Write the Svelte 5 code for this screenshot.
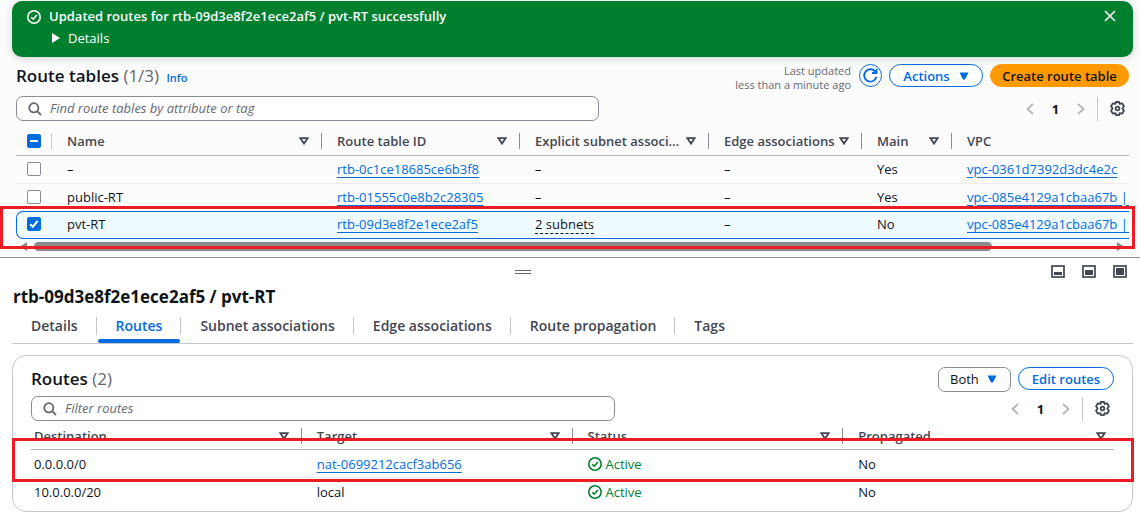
<script>
  let rows = $state([
    { name: '–', id: 'rtb-0c1ce18685ce6b3f8', subnets: '–', edge: '–', main: 'Yes', vpc: 'vpc-0361d7392d3dc4e2c', selected: false },
    { name: 'public-RT', id: 'rtb-01555c0e8b2c28305', subnets: '–', edge: '–', main: 'Yes', vpc: 'vpc-085e4129a1cbaa67b | th', selected: false },
    { name: 'pvt-RT', id: 'rtb-09d3e8f2e1ece2af5', subnets: '2 subnets', edge: '–', main: 'No', vpc: 'vpc-085e4129a1cbaa67b | th', selected: true }
  ]);
  const columns = [
    { label: 'Name', cls: 'c-name' },
    { label: 'Route table ID', cls: 'c-id' },
    { label: 'Explicit subnet associ…', cls: 'c-subnet' },
    { label: 'Edge associations', cls: 'c-edge' },
    { label: 'Main', cls: 'c-main' },
    { label: 'VPC', cls: 'c-vpc' }
  ];
  const routeColumns = ['Destination', 'Target', 'Status', 'Propagated'];
  const routes = [
    { dest: '0.0.0.0/0', target: 'nat-0699212cacf3ab656', link: true, propagated: 'No' },
    { dest: '10.0.0.0/20', target: 'local', link: false, propagated: 'No' }
  ];
  const tabs = ['Details', 'Routes', 'Subnet associations', 'Edge associations', 'Route propagation', 'Tags'];
  let active = $state('Routes');
  const panelIcons = [
    { label: 'Small panel', y: 7, h: 3 },
    { label: 'Medium panel', y: 5, h: 5 },
    { label: 'Full panel', y: 3, h: 7 }
  ];
</script>

{#snippet check()}
  <svg class="check" viewBox="0 0 14 14" aria-hidden="true"><circle cx="7" cy="7" r="6.2" /><path d="M4.2 7.2 6.2 9.2 9.9 5" /></svg>
{/snippet}
{#snippet sort()}
  <svg class="sort" viewBox="0 0 10 8" aria-hidden="true"><path d="M1.4 1.2H8.6L5 6.6Z" /></svg>
{/snippet}
{#snippet caret()}
  <svg class="caret" viewBox="0 0 10 8" aria-hidden="true"><path d="M.5.5H9.5L6 7.5H4Z" /></svg>
{/snippet}
{#snippet search()}
  <svg class="glass" viewBox="0 0 14 14" aria-hidden="true"><circle cx="5.8" cy="5.8" r="4.6" /><path d="M9.2 9.2 13 13" /></svg>
{/snippet}
{#snippet pager()}
  <div class="pager">
    <button class="page-arrow" aria-label="Previous page"><svg viewBox="0 0 8 12"><path d="M7 1 1.5 6 7 11" /></svg></button>
    <span class="page">1</span>
    <button class="page-arrow" aria-label="Next page"><svg viewBox="0 0 8 12"><path d="M1 1 6.5 6 1 11" /></svg></button>
    <span class="rule"></span>
    <button class="gear" aria-label="Preferences">
      <svg viewBox="0 0 14 14"><path d="M5.5.9H8.5L9 2.7 11.3 2.2 13 4.9 11.6 7 13 9.1 11.3 11.8 9 11.3 8.5 13.1H5.5L5 11.3 2.7 11.8 1 9.1 2.4 7 1 4.9 2.7 2.2 5 2.7Z" /><circle cx="7" cy="7" r="1.7" /></svg>
    </button>
  </div>
{/snippet}

<div class="page-root">
  <div class="flash" role="status">
    {@render check()}
    <div class="flash-body">
      <strong>Updated routes for rtb-09d3e8f2e1ece2af5 / pvt-RT successfully</strong>
      <button class="details"><svg viewBox="0 0 8 10" aria-hidden="true"><path d="M0 0 8 5 0 10Z" /></svg>Details</button>
    </div>
    <button class="close" aria-label="Dismiss"><svg viewBox="0 0 12 12"><path d="M1 1 11 11M11 1 1 11" /></svg></button>
  </div>

  <section class="tables">
    <header class="bar">
      <h1>Route tables <span class="count">(1/3)</span> <a class="info" href="#info">Info</a></h1>
      <div class="updated">Last updated<br />less than a minute ago</div>
      <button class="btn round" aria-label="Refresh"><svg viewBox="0 0 18 18"><path d="M15.2 10.4A6.5 6.5 0 1 1 14.2 5.2M15.4 1.8V6.4H10.6" /></svg></button>
      <button class="btn actions">Actions {@render caret()}</button>
      <button class="btn primary">Create route table</button>
    </header>
    <div class="tools">
      <label class="search">{@render search()}<input type="text" aria-label="Find route tables" placeholder="Find route tables by attribute or tag" /></label>
      {@render pager()}
    </div>

    <div class="grid-area">
      <div class="clip">
        <table class="main-table">
          <thead>
            <tr>
              <th class="c-check"><div class="th"><input type="checkbox" class="mixed" checked aria-label="Select all" /></div></th>
              {#each columns as c}
                <th class={c.cls}><div class="th"><span>{c.label}</span>{@render sort()}</div></th>
              {/each}
            </tr>
          </thead>
          <tbody>
            {#each rows as r}
              <tr class:selected={r.selected}>
                <td class="c-check"><input type="checkbox" bind:checked={r.selected} aria-label={'Select ' + r.id} /></td>
                <td>{r.name}</td>
                <td><a href="#{r.id}">{r.id}</a></td>
                <td><span class:dashed={r.subnets !== '–'}>{r.subnets}</span></td>
                <td>{r.edge}</td>
                <td>{r.main}</td>
                <td><a href="#vpc">{r.vpc}</a></td>
              </tr>
            {/each}
          </tbody>
        </table>
      </div>
      <div class="scrollbar" aria-hidden="true">
        <svg viewBox="0 0 7 9"><path d="M7 0V9L0 4.5Z" /></svg>
        <div class="track"><div class="thumb"></div></div>
        <svg viewBox="0 0 7 9"><path d="M0 0V9L7 4.5Z" /></svg>
      </div>
      <div class="mark mark-row"></div>
    </div>
  </section>

  <section class="panel">
    <div class="panel-top">
      <button class="handle" aria-label="Resize panel"></button>
      <div class="sizes">
        {#each panelIcons as p}
          <button aria-label={p.label}><svg viewBox="0 0 14 14"><rect class="frame" x="1" y="1" width="12" height="11" /><rect x="3" y={p.y} width="8" height={p.h} /></svg></button>
        {/each}
      </div>
    </div>
    <h2>rtb-09d3e8f2e1ece2af5 / pvt-RT</h2>
    <div class="tabs" role="tablist">
      {#each tabs as t}
        <div class="tab"><button role="tab" aria-selected={active === t} class:active={active === t} onclick={() => (active = t)}>{t}</button></div>
      {/each}
    </div>

    <div class="card">
      <header class="card-head">
        <h3>Routes <span class="count">(2)</span></h3>
        <div class="select"><select aria-label="Route type"><option>Both</option></select>{@render caret()}</div>
        <button class="btn edit">Edit routes</button>
      </header>
      <div class="tools">
        <label class="search">{@render search()}<input type="text" aria-label="Filter routes" placeholder="Filter routes" /></label>
        {@render pager()}
      </div>
      <table class="routes">
        <thead>
          <tr>{#each routeColumns as c}<th><div class="th"><span>{c}</span>{@render sort()}</div></th>{/each}</tr>
        </thead>
        <tbody>
          {#each routes as r}
            <tr>
              <td>{r.dest}</td>
              <td>{#if r.link}<a href="#nat">{r.target}</a>{:else}{r.target}{/if}</td>
              <td><span class="status">{@render check()}Active</span></td>
              <td>{r.propagated}</td>
            </tr>
          {/each}
        </tbody>
      </table>
      <div class="mark mark-route"></div>
    </div>
  </section>
</div>

<style>
  :global(body) { background: #fff; }
  .page-root { font: 13px/20px "Open Sans", "Noto Sans", sans-serif; color: #0f141a; background: #fcfcfd; overflow: hidden; }
  .page-root * { box-sizing: border-box; }
  button, input, select { font: inherit; color: inherit; }
  button { padding: 0; border: 0; background: none; cursor: pointer; }
  svg { display: block; flex: none; fill: none; stroke: currentColor; }
  h1, h2, h3 { margin: 0; font-size: 17px; line-height: 24px; font-weight: 600; }
  .count { font-weight: 400; color: #656871; }
  a { color: #006ce0; text-underline-offset: 3px; }

  .flash { display: flex; gap: 8px; margin: 1px 7px 0 12px; padding: 5px 17px 7px 15px; min-height: 56px; border-radius: 10px; background: #00802f; color: #fff; box-shadow: 0 2px 8px rgba(0, 7, 22, 0.16); }
  .check { width: 14px; height: 14px; stroke-width: 1.6; }
  .flash > .check { margin-top: 4px; }
  .flash-body { flex: 1; display: flex; flex-direction: column; align-items: flex-start; }
  .flash strong { font-weight: 600; }
  .details { display: flex; align-items: center; gap: 8px; margin-left: 3px; font-weight: 500; line-height: 24px; }
  .details svg { width: 8px; height: 10px; fill: #fff; stroke: none; }
  .close { width: 12px; height: 20px; }
  .close svg { width: 12px; height: 12px; stroke-width: 1.6; }

  .tables { padding: 7px 11px 6px 16px; }
  .bar { display: flex; align-items: flex-start; height: 32px; }
  .bar h1 { margin-right: auto; }
  .info { margin-left: 3px; font-size: 11px; font-weight: 600; text-decoration: none; }
  .updated { margin-right: 8px; font-size: 11px; line-height: 14px; text-align: right; color: #656871; }
  .btn { display: flex; align-items: center; justify-content: center; height: 23px; border: 1px solid #006ce0; border-radius: 12px; background: #fff; color: #006ce0; font-weight: 600; }
  .round { width: 23px; margin-right: 7px; }
  .round svg { width: 17px; height: 17px; stroke-width: 2; }
  .actions { gap: 9px; width: 94px; margin-right: 7px; }
  .caret { width: 10px; height: 8px; fill: #006ce0; stroke: none; }
  .primary { width: 139px; border-color: #ff9900; background: #ff9900; color: #0f141a; }

  .tools { display: flex; align-items: center; }
  .search { display: flex; align-items: center; gap: 8px; height: 25px; padding: 0 11px; border: 1px solid #8c8c94; border-radius: 7px; background: #fff; }
  .tables .search { width: 583px; }
  .card .search { width: 584px; }
  .search input { flex: 1; min-width: 0; padding: 0 0 1px; border: 0; outline: 0; background: none; }
  .search input::placeholder { color: #656871; font-style: italic; opacity: 1; }
  .glass { width: 14px; height: 14px; stroke: #656871; stroke-width: 1.8; }
  .pager { display: flex; align-items: center; margin-left: auto; padding-right: 4px; }
  .page-arrow { color: #b4b4bb; }
  .page-arrow svg { width: 8px; height: 12px; stroke-width: 1.8; }
  .page { width: 43px; text-align: center; font-weight: 700; }
  .rule { width: 1px; height: 24px; margin: 0 12px; background: #c6c6cd; }
  .gear { color: #424650; }
  .gear svg { width: 15px; height: 15px; stroke-width: 1.7; stroke-linejoin: round; }

  .grid-area { position: relative; padding-top: 6px; }
  .clip { overflow: hidden; }
  table { border-collapse: separate; border-spacing: 0; table-layout: fixed; width: 100%; }
  .main-table { width: 112%; }
  th, td { padding: 0; text-align: left; font-weight: 400; white-space: nowrap; }
  th { height: 29px; border-bottom: 1px solid #b6b6bf; color: #424650; font-weight: 600; }
  .th { display: flex; align-items: center; justify-content: space-between; height: 16px; padding: 0 12px 0 15px; border-right: 1px solid #8c8c94; }
  .sort { width: 10px; height: 8px; stroke-width: 1.8; }
  td { height: 28px; padding: 0 0 2px 15px; border-bottom: 1px solid #ebebf0; }
  .c-check { width: 36px; }
  .c-check .th { padding: 0 0 0 11px; border-color: #c6c6cd; }
  td.c-check { padding-left: 11px; }
  .c-name { width: 270px; }
  .c-id { width: 198px; }
  .c-subnet { width: 189px; }
  .c-edge { width: 153px; }
  .c-main { width: 90px; }
  tbody tr:nth-child(2) td { height: 27px; border-bottom: 0; }
  tr.selected td { border-top: 1px solid #006ce0; border-bottom: 1px solid #006ce0; background: #f0fbff; }
  tr.selected td:first-child { border-left: 1px solid #006ce0; border-radius: 7px 0 0 7px; padding-left: 10px; }
  .dashed { border-bottom: 1px dashed #0f141a; }
  input[type='checkbox'] { display: block; appearance: none; width: 14px; height: 14px; margin: 0; border: 1px solid #8c8c94; border-radius: 2px; background: #fff center / 14px 14px no-repeat; }
  input[type='checkbox']:checked { border-color: #006ce0; background-color: #006ce0; background-image: url("data:image/svg+xml,%3Csvg xmlns='http://www.w3.org/2000/svg' viewBox='0 0 14 14'%3E%3Cpath d='M3.2 7.2 5.8 9.8 10.6 4' fill='none' stroke='white' stroke-width='2'/%3E%3C/svg%3E"); }
  input.mixed:checked { background-image: url("data:image/svg+xml,%3Csvg xmlns='http://www.w3.org/2000/svg' viewBox='0 0 14 14'%3E%3Cpath d='M3 7H11' stroke='white' stroke-width='2'/%3E%3C/svg%3E"); }

  .scrollbar { display: flex; gap: 7px; padding: 3px 5px 0 4px; color: #8b8b8b; }
  .scrollbar svg { width: 7px; height: 9px; fill: currentColor; stroke: none; }
  .track { flex: 1; }
  .thumb { width: 89%; height: 9px; border-radius: 5px; background: #8b8b8b; }
  .mark { position: absolute; border: 3px solid #ed1c24; pointer-events: none; }
  .mark-row { left: -16px; right: -6px; bottom: 2px; height: 43px; }

  .panel { padding: 0 7px 10px 12px; border-top: 1px solid #8c8c94; background: #fff; }
  .panel-top { display: grid; grid-template-columns: 1fr auto 1fr; align-items: center; height: 27px; }
  .handle { grid-column: 2; width: 16px; height: 4px; margin-right: 100px; border-top: 1px solid #656871; border-bottom: 1px solid #656871; }
  .sizes { display: flex; justify-content: flex-end; gap: 17px; padding: 1px 6px 0 0; color: #424650; }
  .sizes svg { width: 14px; height: 14px; fill: currentColor; stroke: none; }
  .sizes .frame { fill: none; stroke: currentColor; stroke-width: 1.7; }
  h2 { padding-left: 1px; font-weight: 700; }
  .tabs { display: flex; align-items: center; height: 35px; border-bottom: 1px solid #c6c6cd; }
  .tab { display: flex; height: 100%; align-items: center; }
  .tab:not(:last-child)::after { content: ''; width: 1px; height: 18px; background: #c6c6cd; }
  .tab button { height: 34px; padding: 4px 18px 0 19px; border-bottom: 4px solid transparent; color: #424650; font-size: 14px; font-weight: 600; }
  .tab .active { color: #006ce0; position: relative; }
  .tab .active::after { content: ''; position: absolute; left: 1px; right: 0; bottom: -4px; height: 4px; border-radius: 2px; background: #006ce0; }

  .card { position: relative; margin-top: 11px; padding: 11px 18px 6px; border: 1px solid #c6c6cd; border-radius: 14px; }
  .card-head { display: flex; align-items: flex-start; height: 29px; }
  .card-head h3 { margin-right: auto; }
  .select { position: relative; width: 73px; margin-right: 7px; }
  .select select { display: block; appearance: none; width: 100%; height: 25px; padding: 0 11px 2px; border: 1px solid #8c8c94; border-radius: 7px; background: #fff; }
  .select .caret { position: absolute; right: 14px; top: 8px; pointer-events: none; }
  .edit { width: 96px; }
  .routes th { padding-top: 2px; }
  .routes th:first-child .th, .routes td:first-child { padding-left: 3px; }
  .routes th:last-child .th { padding-right: 8px; border-right: 0; }
  .routes tbody tr:last-child td { border-bottom: 0; }
  .routes td { height: 28px; padding-bottom: 0; }
  .status { display: flex; align-items: center; gap: 4px; color: #00802f; }
  .mark-route { left: -1px; right: -2px; bottom: 29px; height: 44px; }
</style>
